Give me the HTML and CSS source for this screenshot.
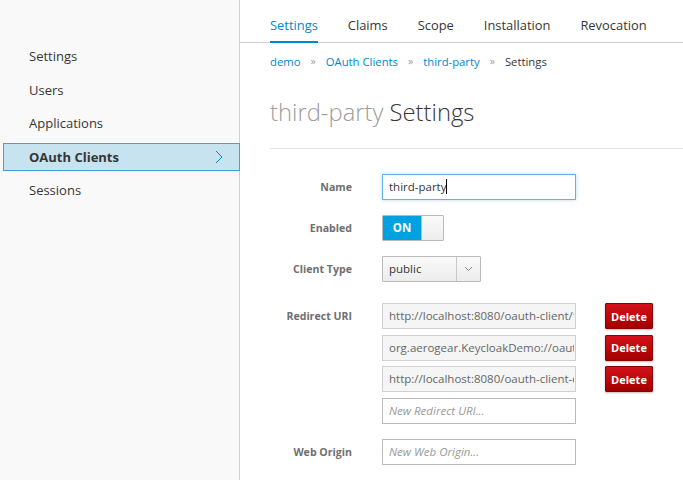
FILE: index.html
```html
<!DOCTYPE html>
<html>
<head>
<meta charset="utf-8">
<link rel="stylesheet" href="styles.css">
</head>
<body>
<aside class="sidebar">
  <ul class="nav">
    <li class="nav-item">Settings</li>
    <li class="nav-item">Users</li>
    <li class="nav-item">Applications</li>
    <li class="nav-item active">OAuth Clients
      <svg class="chev" width="8" height="14" viewBox="0 0 8 14"><path d="M1 1 L7 7 L1 13" fill="none" stroke="#0088ce" stroke-width="1"/></svg>
    </li>
    <li class="nav-item">Sessions</li>
  </ul>
</aside>
<main class="main">
  <nav class="tabs">
    <span class="tab active">Settings</span>
    <span class="tab">Claims</span>
    <span class="tab">Scope</span>
    <span class="tab">Installation</span>
    <span class="tab">Revocation</span>
  </nav>
  <div class="content">
    <ol class="crumbs">
      <li class="crumb link">demo</li>
      <li class="sep">»</li>
      <li class="crumb link">OAuth Clients</li>
      <li class="sep">»</li>
      <li class="crumb link">third-party</li>
      <li class="sep">»</li>
      <li class="crumb">Settings</li>
    </ol>
    <h1 class="title"><span class="muted">third-party</span> Settings</h1>
    <form class="form">
      <div class="row">
        <label class="label">Name</label>
        <div class="field focus">third-party<span class="caret"></span></div>
      </div>
      <div class="row">
        <label class="label">Enabled</label>
        <div class="toggle"><span class="on">ON</span><span class="knob"></span></div>
      </div>
      <div class="row">
        <label class="label">Client Type</label>
        <div class="select"><span class="sel-val">public</span><span class="sel-arrow"><svg width="9" height="6" viewBox="0 0 9 6"><path d="M1 1 L4.5 4.5 L8 1" fill="none" stroke="#8a8a8a" stroke-width="1"/></svg></span></div>
      </div>
      <div class="row uris">
        <label class="label">Redirect URI</label>
        <div class="stack">
          <div class="uri"><div class="field ro"><span class="clip">http://localhost:8080/oauth-client/*</span></div><button type="button" class="btn-del">Delete</button></div>
          <div class="uri"><div class="field ro"><span class="clip">org.aerogear.KeycloakDemo://oauth2Callback</span></div><button type="button" class="btn-del">Delete</button></div>
          <div class="uri"><div class="field ro"><span class="clip">http://localhost:8080/oauth-client-cdi/*</span></div><button type="button" class="btn-del">Delete</button></div>
          <div class="uri"><div class="field ph">New Redirect URI...</div></div>
        </div>
      </div>
      <div class="row">
        <label class="label">Web Origin</label>
        <div class="field ph">New Web Origin...</div>
      </div>
    </form>
  </div>
</main>
</body>
</html>
```

FILE: styles.css
```css
* { box-sizing: border-box; }
html, body { margin: 0; padding: 0; }
body {
  font-family: "Open Sans", "Liberation Sans", sans-serif;
  color: #363636;
  display: flex;
  height: 480px;
  overflow: hidden;
  background: #fff;
}
.sidebar {
  width: 240px;
  flex: none;
  background: #f9f9f9;
  border-right: 1px solid #d1d1d1;
  padding-top: 42px;
}
.nav {
  list-style: none;
  margin: 0;
  padding: 0;
  display: flex;
  flex-direction: column;
  gap: 5.5px;
}
.nav-item {
  height: 28px;
  margin-left: 3px;
  padding-left: 25px;
  padding-right: 16px;
  border: 1px solid transparent;
  font-size: 13px;
  line-height: 26px;
  color: #363636;
  display: flex;
  align-items: center;
  justify-content: space-between;
}
.nav-item.active {
  background: #c7e3f0;
  border-color: #39a5dc;
  font-weight: bold;
  margin-right: -1px;
}
.chev { display: block; }
.main {
  flex: 1;
  min-width: 0;
}
.tabs {
  height: 43px;
  border-bottom: 1px solid #d1d1d1;
  padding-left: 30px;
  display: flex;
  gap: 30px;
}
.tab {
  font-size: 12.9px;
  height: 43px;
  margin-bottom: -1px;
  color: #363636;
  border-bottom: 2px solid transparent;
  display: flex;
  align-items: center;
  padding-top: 8px;
}
.tab.active {
  color: #0088ce;
  border-bottom-color: #0088ce;
}
.content {
  padding-left: 30px;
}
.crumbs {
  list-style: none;
  margin: 0;
  padding: 0;
  display: flex;
  font-size: 11.3px;
  height: 36px;
  align-items: center;
}
.crumb.link { color: #0088ce; }
.sep {
  color: #9c9c9c;
  padding: 0 10px;
  font-size: 10.5px;
}
.title {
  margin: 0;
  font-size: 23.8px;
  font-weight: 300;
  color: #363636;
  height: 70px;
  line-height: 62px;
  border-bottom: 1px solid #e5e5e5;
  padding-top: 2px;
}
.muted { color: #9c9c9c; }
.form {
  padding-top: 25px;
}
.row {
  display: flex;
  align-items: flex-start;
  margin-bottom: 15px;
}
.row.uris { margin-top: 21px; }
.label {
  width: 82px;
  height: 26px;
  margin-right: 30px;
  text-align: right;
  font-size: 10.6px;
  font-weight: bold;
  color: #6f6f6f;
  line-height: 25px;
  padding-top: 1px;
}
.field {
  width: 194px;
  height: 26px;
  border: 1px solid #bababa;
  padding: 0 6px;
  font-size: 11.5px;
  line-height: 24px;
  color: #363636;
  white-space: nowrap;
  overflow: hidden;
  background: #fff;
}
.clip {
  display: block;
  overflow: hidden;
  white-space: nowrap;
}
.field.focus {
  border-color: #66afe9;
  box-shadow: 0 0 4px rgba(102, 175, 233, 0.45);
}
.caret {
  display: inline-block;
  width: 1px;
  height: 15px;
  background: #000;
  vertical-align: -3px;
}
.field.ro {
  background: #f5f5f5;
  border-color: #d1d1d1;
  color: #666;
  padding-right: 1px;
}
.field.ph {
  font-style: italic;
  color: #999;
}
.toggle {
  width: 62px;
  height: 26px;
  border: 1px solid #bbb;
  display: flex;
  border-radius: 1px;
  overflow: hidden;
}
.on {
  width: 38px;
  background: #00a1e1;
  color: #fff;
  font-weight: bold;
  font-size: 11.5px;
  line-height: 24px;
  text-align: center;
}
.knob {
  flex: 1;
  background: linear-gradient(#fafafa, #ededed);
  border-left: 1px solid #bbb;
}
.select {
  width: 99px;
  height: 26px;
  border: 1px solid #bbb;
  border-radius: 1px;
  display: flex;
  background: linear-gradient(#fafafa, #ececec);
}
.sel-val {
  flex: 1;
  font-size: 11.5px;
  line-height: 24px;
  padding-left: 6px;
  color: #363636;
}
.sel-arrow {
  width: 24px;
  border-left: 1px solid #c8c8c8;
  display: flex;
  align-items: center;
  justify-content: center;
}
.sel-arrow svg { display: block; }
.stack {
  display: flex;
  flex-direction: column;
  gap: 5.7px;
}
.uri {
  display: flex;
  align-items: center;
  gap: 29px;
}
.btn-del {
  width: 48px;
  height: 26px;
  border: 1px solid #8b0000;
  border-radius: 1px;
  background: linear-gradient(#d4111a, #a30000);
  color: #fff;
  font-family: "Open Sans", "Liberation Sans", sans-serif;
  font-weight: bold;
  font-size: 11px;
  padding: 0;
  box-shadow: 0 1px 2px rgba(0,0,0,0.25);
}
```
